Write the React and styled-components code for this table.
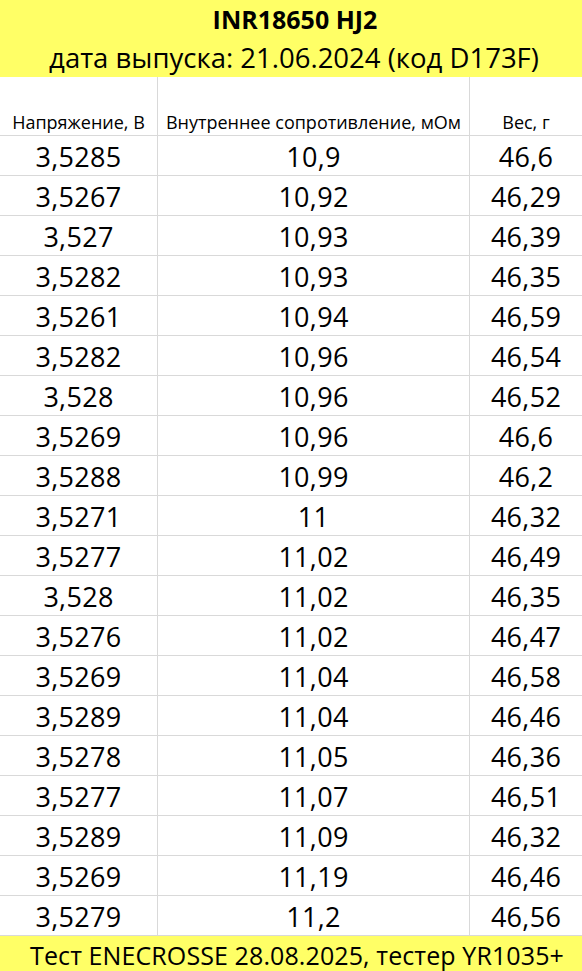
import styled, { createGlobalStyle } from "styled-components";

const GlobalStyle = createGlobalStyle`
  html, body {
    margin: 0;
    padding: 0;
    background: #ffffff;
  }
  body {
    font-family: "Open Sans", "Noto Sans", "DejaVu Sans", sans-serif;
    color: #000;
  }
`;

const rows = [
  ["3,5285", "10,9", "46,6"],
  ["3,5267", "10,92", "46,29"],
  ["3,527", "10,93", "46,39"],
  ["3,5282", "10,93", "46,35"],
  ["3,5261", "10,94", "46,59"],
  ["3,5282", "10,96", "46,54"],
  ["3,528", "10,96", "46,52"],
  ["3,5269", "10,96", "46,6"],
  ["3,5288", "10,99", "46,2"],
  ["3,5271", "11", "46,32"],
  ["3,5277", "11,02", "46,49"],
  ["3,528", "11,02", "46,35"],
  ["3,5276", "11,02", "46,47"],
  ["3,5269", "11,04", "46,58"],
  ["3,5289", "11,04", "46,46"],
  ["3,5278", "11,05", "46,36"],
  ["3,5277", "11,07", "46,51"],
  ["3,5289", "11,09", "46,32"],
  ["3,5269", "11,19", "46,46"],
  ["3,5279", "11,2", "46,56"],
];

const Sheet = styled.div`
  width: 582px;
  height: 971px;
  overflow: hidden;
  display: flex;
  flex-direction: column;
`;

const Banner = styled.div`
  background: #ffff66;
  display: flex;
  flex-direction: column;
  align-items: center;
  justify-content: center;
  flex-shrink: 0;
  height: ${p => p.h}px;
  overflow: hidden;
`;

const Title = styled.div`
  font-weight: 700;
  font-size: 25px;
  line-height: 38px;
  margin-left: 8px;
`;

const Subtitle = styled.div`
  font-size: 27.5px;
  line-height: 39px;
  margin-left: 6px;
`;

const FooterText = styled.div`
  font-size: 25px;
  line-height: 32px;
  letter-spacing: 0.1px;
  margin-left: 12px;
  margin-top: 2px;
`;

const Grid = styled.div`
  display: grid;
  grid-template-columns: 158px 312px 1fr;
  flex-shrink: 0;
`;

const Cell = styled.div`
  border-right: 1px solid #d9d9d9;
  border-bottom: 1px solid #d9d9d9;
  display: flex;
  justify-content: center;
  align-items: flex-end;
  height: ${p => (p.head ? 57 : 39)}px;
  font-size: ${p => (p.head ? 18 : 27)}px;
  line-height: ${p => (p.head ? 24 : 37)}px;
  letter-spacing: ${p => (p.head ? "0" : "0.3px")};
  padding-bottom: ${p => (p.head ? 1 : 0)}px;
  box-sizing: content-box;
  white-space: nowrap;
  &:nth-child(3n) {
    border-right: none;
  }
`;

export default function App() {
  return (
    <Sheet>
      <GlobalStyle />
      <Banner h={77}>
        <Title>INR18650 HJ2</Title>
        <Subtitle>дата выпуска: 21.06.2024 (код D173F)</Subtitle>
      </Banner>
      <Grid>
        <Cell head>Напряжение, В</Cell>
        <Cell head>Внутреннее сопротивление, мОм</Cell>
        <Cell head>Вес, г</Cell>
        {rows.map((r, i) =>
          r.map((v, j) => <Cell key={i + "-" + j}>{v}</Cell>)
        )}
      </Grid>
      <Banner h={35}>
        <FooterText>Тест ENECROSSE 28.08.2025, тестер YR1035+</FooterText>
      </Banner>
    </Sheet>
  );
}
